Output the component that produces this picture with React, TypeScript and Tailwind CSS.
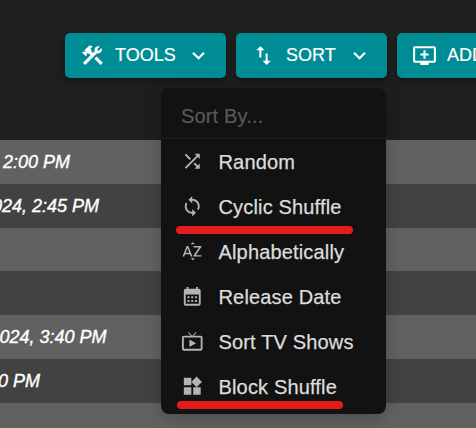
import {
  MdAddToQueue,
  MdCalendarMonth,
  MdConstruction,
  MdImportExport,
  MdKeyboardArrowDown,
  MdLiveTv,
  MdLoop,
  MdShuffle,
  MdSortByAlpha,
  MdWidgets,
} from "react-icons/md";
import type { IconType } from "react-icons";

const rows = [
  { text: "2:00 PM", width: "w-[70px]", shade: "bg-[#616161] h-[44px]" },
  { text: "2024, 2:45 PM", width: "w-[99px]", shade: "bg-[#424242] h-[44px]" },
  { text: "", width: "w-0", shade: "bg-[#616161] h-[43px]" },
  { text: "", width: "w-0", shade: "bg-[#424242] h-[44px]" },
  { text: "2024, 3:40 PM", width: "w-[106.5px]", shade: "bg-[#616161] h-[44px]" },
  { text: "4:30 PM", width: "w-[40px]", shade: "bg-[#424242] h-[44px]" },
  { text: "", width: "w-0", shade: "bg-[#616161] h-[25px]" },
];

const items: { label: string; icon: IconType; mark?: string }[] = [
  { label: "Random", icon: MdShuffle },
  { label: "Cyclic Shuffle", icon: MdLoop, mark: "left-[14.5px] top-[42px] w-[177.5px]" },
  { label: "Alphabetically", icon: MdSortByAlpha },
  { label: "Release Date", icon: MdCalendarMonth },
  { label: "Sort TV Shows", icon: MdLiveTv },
  { label: "Block Shuffle", icon: MdWidgets, mark: "left-[15.5px] top-[37px] w-[166px]" },
];

function ToolButton({ label, icon: Icon, className, arrow = true }: { label: string; icon: IconType; className: string; arrow?: boolean }) {
  return (
    <button className={`flex h-[45px] shrink-0 items-center rounded-[5px] bg-[#008c94] pl-[15px] text-[18px] text-white shadow-[0_3px_4px_rgba(0,0,0,0.3)] ${className}`}>
      <Icon className="size-[25px] shrink-0" />
      <span className="ml-[10px] whitespace-nowrap [-webkit-text-stroke:0.2px]">{label}</span>
      {arrow && <MdKeyboardArrowDown className="ml-auto size-[25px] shrink-0" />}
    </button>
  );
}

export default function App() {
  return (
    <div className="relative h-[428px] w-[476px] overflow-hidden bg-[#1e1e1e] font-['Liberation_Sans',Arial,sans-serif]">
      <div className="flex h-[140px] items-start gap-[10px] pt-[33px] pl-[65px]">
        <ToolButton label="TOOLS" icon={MdConstruction} className="w-[161px] pr-[15px]" />
        <ToolButton label="SORT" icon={MdImportExport} className="w-[151px] pr-[15px]" />
        <ToolButton label="ADD" icon={MdAddToQueue} className="w-[130px]" arrow={false} />
      </div>

      {rows.map((row, i) => (
        <div key={i} className={`flex items-center ${row.shade}`}>
          <div className={`flex justify-end text-[18px] whitespace-nowrap text-white italic [-webkit-text-stroke:0.35px] ${row.width}`}>{row.text}</div>
        </div>
      ))}

      <div className="absolute top-[88px] left-[161px] h-[326px] w-[225px] rounded-[8px] bg-[#121212] text-[20px] tracking-[0.16px] shadow-[0_4px_16px_rgba(0,0,0,0.22)]">
        <div className="flex h-[51px] items-center border-b border-[#1e1e1e] pt-[6px] pl-[20px] text-[#595959] [-webkit-text-stroke:0.2px]">Sort By...</div>
        {items.map(({ label, icon: Icon, mark }) => (
          <div key={label} className="relative flex h-[45px] items-center pl-[20px] text-[#dcdcdc]">
            <Icon className="size-[22.5px] text-[#b4b4b4]" />
            <span className="ml-[15px] whitespace-nowrap [-webkit-text-stroke:0.25px]">{label}</span>
            {mark && <span className={`absolute h-[8px] rounded-full bg-[#e61c1c] ${mark}`} />}
          </div>
        ))}
      </div>
    </div>
  );
}
